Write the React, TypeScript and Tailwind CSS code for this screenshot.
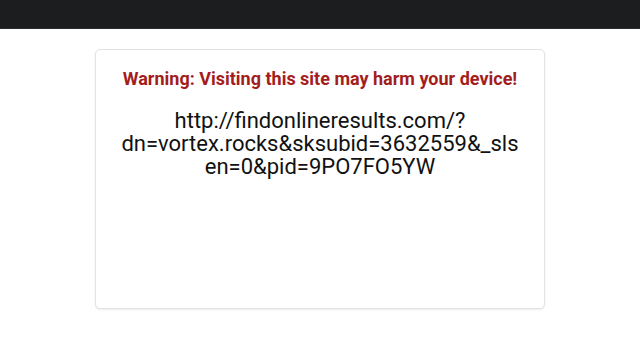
export default function App() {
  return (
    <div className="min-h-[360px] w-[640px] bg-white font-['Roboto',sans-serif]">
      <div className="h-[29px] bg-[#1c1d1f] border-b border-[#2b2c2e]" />
      <div className="mt-[20px] mx-auto w-[450px] h-[260px] rounded-[5px] border border-[#e2e2e2] bg-white shadow-[0_1px_2px_rgba(0,0,0,0.08)] px-[24px] pt-[18px]">
        <p className="text-center text-[18px] leading-[22px] font-bold text-[#a31d1d]">
          Warning: Visiting this site may harm your device!
        </p>
        <p className="mt-[19px] text-center text-[22px] leading-[23px] text-[#111] break-words">
          http://findonlineresults.com/?dn=vortex.rocks&amp;sksubid=3632559&amp;_slsen=0&amp;pid=9PO7FO5YW
        </p>
      </div>
    </div>
  );
}
